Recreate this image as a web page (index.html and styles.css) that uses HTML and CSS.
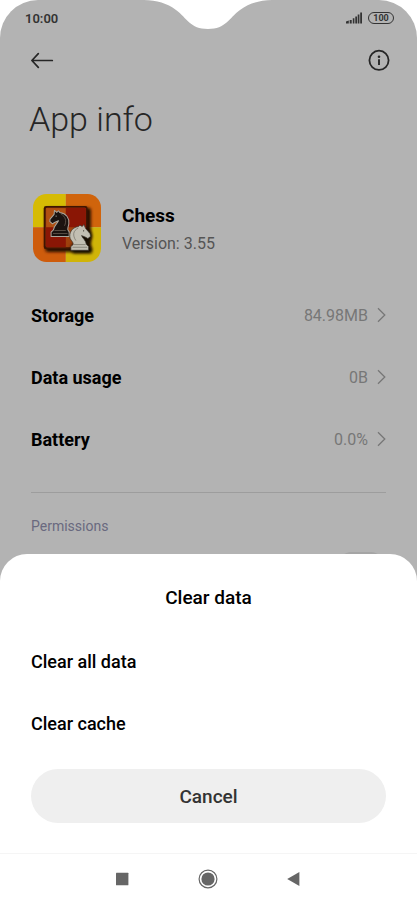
FILE: index.html
```html
<!DOCTYPE html>
<html lang="en">
<head>
<meta charset="utf-8">
<meta name="viewport" content="width=device-width, initial-scale=1">
<title>App info</title>
<link rel="stylesheet" href="styles.css">
</head>
<body>
<div class="screen">
  <svg class="notch" width="130" height="30" viewBox="0 0 130 30" aria-hidden="true">
    <path d="M0 0C13 .6 23 3 32 10C43 18 46 29 64 29C82 29 85 18 96 10C105 3 115 .6 128 0Z" fill="#fff"/>
  </svg>
  <header class="status">
    <span class="clock">10:00</span>
    <span class="indicators">
      <svg width="16" height="12" viewBox="0 0 16 12" aria-hidden="true">
        <path d="M0 9.5L2.8 8.5V11.5H0ZM3.7 8H5.7V11.5H3.7ZM6.8 6.2H8.4V11.5H6.8ZM9.3 4.4H11V11.5H9.3ZM11.7 2.4H13.4V11.5H11.7ZM14.2 .5H16V11.5H14.2Z" fill="#333"/>
      </svg>
      <span class="battery">100</span>
    </span>
  </header>
  <main class="page">
    <nav class="toolbar">
      <button class="icon-button" aria-label="Back">
        <svg width="24" height="24" viewBox="0 0 24 24" fill="none" stroke="#262626" stroke-width="1.7" stroke-linecap="round" stroke-linejoin="round"><path d="M21.3 12.5H1M7.3 5.6L.9 12.5L7.3 19.4"/></svg>
      </button>
      <button class="icon-button" aria-label="Information">
        <svg width="24" height="24" viewBox="0 0 24 24"><circle cx="12" cy="12.3" r="9.6" fill="none" stroke="#262626" stroke-width="1.8"/><circle cx="12" cy="8.7" r="1.3" fill="#262626"/><path d="M12 11.3V17" stroke="#262626" stroke-width="1.9"/></svg>
      </button>
    </nav>
    <h1 class="title">App info</h1>
    <section class="app">
      <svg class="app-icon" width="68" height="68" viewBox="25 27 203 203" role="img" aria-label="Chess">
        <defs>
          <clipPath id="tile"><rect x="25" y="27" width="203" height="203" rx="40"/></clipPath>
          <filter id="soft" x="-20%" y="-20%" width="140%" height="140%"><feGaussianBlur stdDeviation="4"/></filter>
          <linearGradient id="board" x2="1" y2="1"><stop stop-color="#b04c12"/><stop offset="1" stop-color="#963c0a"/></linearGradient>
        </defs>
        <g clip-path="url(#tile)">
          <path fill="#d6bb04" d="M25 27H123V126H25Z"/>
          <path fill="#d0640c" d="M123 27H228V126H123Z"/>
          <path fill="#ce5c0c" d="M25 126H123V230H25Z"/>
          <path fill="#d0b408" d="M123 126H228V230H123Z"/>
          <rect x="62" y="68" width="136" height="132" rx="8" fill="#281000" filter="url(#soft)"/>
          <rect x="57" y="63" width="131" height="129" rx="7" fill="#3e1502"/>
          <rect x="63" y="68" width="120" height="118" rx="4" fill="url(#board)"/>
          <path fill="#b05012" d="M66 71H123V126H66Z"/>
          <path fill="#8a1605" d="M123 68H179q4 0 4 4V126H123ZM63 126H123V186H67q-4 0-4-4Z"/>
          <path d="M89 76L96 82L101 77L105 82C124 84 134 99 132 116C131 123 128 128 129 134L133 140V154H79V141L86 134C87 122 98 115 101 107L89 112L83 116L75 109L76 102L88 88Z" fill="#1b1310" stroke="#aaa49a" stroke-width="3" stroke-linejoin="round"/>
          <path d="M109 87C122 94 126 108 119 122M89 136H123M85 145H128" fill="none" stroke="#75675c" stroke-width="2"/>
          <circle cx="94" cy="93" r="2" fill="#aaa69a"/>
          <path d="M184 128C198 138 207 151 198 163L190 177L202 190L200 204H145L139 194V184Z" fill="#160d05" filter="url(#soft)"/>
          <path d="M177 118L172 124L165 120L161 124C141 127 131 144 136 160C139 167 146 171 145 178L138 184V195H191V184L184 177C183 165 172 159 170 151L182 156L189 160L197 153L195 145L182 130Z" fill="#c2bfb2" stroke="#38342b" stroke-width="2" stroke-linejoin="round"/>
          <path d="M160 129C144 136 143 151 153 166M147 178H182M143 186H187" fill="none" stroke="#706d62" stroke-width="2"/>
          <circle cx="176" cy="137" r="2" fill="#38342b"/>
        </g>
      </svg>
      <div class="app-text">
        <h2 class="app-name">Chess</h2>
        <p class="app-version">Version: 3.55</p>
      </div>
    </section>
    <div class="rows">
      <a class="row" href="#storage"><span>Storage</span><span class="value">84.98MB</span><svg width="9" height="16" viewBox="0 0 9 16" class="chevron"><path d="M1 1.2L7.8 8L1 14.8"/></svg></a>
      <a class="row" href="#data"><span>Data usage</span><span class="value">0B</span><svg width="9" height="16" viewBox="0 0 9 16" class="chevron"><path d="M1 1.2L7.8 8L1 14.8"/></svg></a>
      <a class="row" href="#battery"><span>Battery</span><span class="value">0.0%</span><svg width="9" height="16" viewBox="0 0 9 16" class="chevron"><path d="M1 1.2L7.8 8L1 14.8"/></svg></a>
    </div>
    <section class="permissions">
      <h3 class="section-title" id="permissions">Permissions</h3>
      <input class="switch" type="checkbox" aria-labelledby="permissions">
    </section>
  </main>
  <div class="bottom">
    <section class="sheet" role="dialog" aria-labelledby="sheet-title">
      <h2 class="sheet-title" id="sheet-title">Clear data</h2>
      <button class="option">Clear all data</button>
      <button class="option">Clear cache</button>
      <button class="cancel">Cancel</button>
    </section>
    <nav class="system-nav">
      <button class="icon-button" aria-label="Recent apps"><svg width="20" height="20" viewBox="0 0 20 20"><rect x="4" y="3.7" width="12.4" height="12.5" rx=".5" fill="#666"/></svg></button>
      <button class="icon-button" aria-label="Home"><svg width="20" height="20" viewBox="0 0 20 20"><circle cx="10" cy="10" r="8.9" fill="none" stroke="#666" stroke-width="1.2"/><circle cx="10" cy="10" r="6.6" fill="#666"/></svg></button>
      <button class="icon-button" aria-label="Back"><svg width="20" height="20" viewBox="0 0 20 20"><path d="M3.2 10L15.4 3V17Z" fill="#666"/></svg></button>
    </nav>
  </div>
</div>
</body>
</html>
```
FILE: styles.css
```css
* {
  box-sizing: border-box;
}

body {
  margin: 0;
  background: #fff;
  font-family: Roboto, "Liberation Sans", sans-serif;
  color: #000;
}

h1, h2, h3, p {
  margin: 0;
}

button {
  padding: 0;
  border: 0;
  background: none;
  font: inherit;
  color: inherit;
}

svg {
  display: block;
}

.screen {
  position: relative;
  height: 100vh;
  overflow: hidden;
  background: #b3b3b3;
  border-radius: 38px 38px 0 0;
}

.notch {
  position: absolute;
  top: 0;
  left: 50%;
  transform: translateX(-50%);
}

.status {
  display: flex;
  justify-content: space-between;
  align-items: center;
  height: 38px;
  padding: 0 23px 2px 25px;
  color: #333;
}

.clock {
  font-size: 13px;
  font-weight: 600;
}

.indicators {
  display: flex;
  align-items: center;
  gap: 6px;
}

.battery {
  width: 26px;
  height: 12px;
  border: 1px solid #333;
  border-radius: 6px;
  font-size: 9px;
  font-weight: 700;
  line-height: 10px;
  text-align: center;
}

.page {
  padding: 0 31px;
}

.toolbar {
  display: flex;
  justify-content: space-between;
  align-items: center;
  height: 44px;
  margin-right: -5px;
}

.title {
  margin: 15px 0 0 -2px;
  font-size: 34px;
  font-weight: 300;
  line-height: 44px;
  color: #262626;
}

.app {
  display: flex;
  align-items: center;
  gap: 21px;
  margin: 53px 0 0 2px;
}

.app-text {
  padding-top: 4px;
}

.app-name {
  font-size: 19px;
  font-weight: 700;
  line-height: 28px;
}

.app-version {
  font-size: 16px;
  line-height: 28px;
  color: #555;
}

.rows {
  margin-top: 22px;
  padding-bottom: 22px;
  border-bottom: 1px solid #9d9d9d;
}

.row {
  display: flex;
  align-items: center;
  height: 62px;
  font-size: 18px;
  font-weight: 700;
  color: inherit;
  text-decoration: none;
}

.value {
  margin: 0 9px 0 auto;
  font-size: 16px;
  font-weight: 400;
  color: #777;
}

.chevron {
  fill: none;
  stroke: #777;
  stroke-width: 1.3;
}

.section-title {
  margin-top: 21px;
  font-size: 14px;
  font-weight: 400;
  line-height: 24px;
  color: #69697f;
}

.switch {
  appearance: none;
  display: block;
  width: 44px;
  height: 24px;
  margin: 14px 3px 0 auto;
  border-radius: 12px;
  background: #a5a5a5;
}

.bottom {
  position: absolute;
  right: 0;
  bottom: 0;
  left: 0;
  background: #fff;
  border-radius: 27px 27px 0 0;
}

.sheet {
  display: flex;
  flex-direction: column;
  padding: 28px 31px 30px;
  font-size: 18px;
  font-weight: 500;
}

.sheet-title {
  margin-bottom: 16px;
  font-size: 19px;
  font-weight: 500;
  line-height: 32px;
  text-align: center;
}

.option {
  height: 62px;
  text-align: left;
}

.cancel {
  height: 54px;
  margin-top: 15px;
  border-radius: 27px;
  background: #efefef;
  font-size: 19px;
  color: #333;
}

.system-nav {
  display: flex;
  justify-content: center;
  align-items: center;
  gap: 66px;
  height: 51px;
  padding-right: 2px;
  border-top: 1px solid #f5f5f5;
}
```
